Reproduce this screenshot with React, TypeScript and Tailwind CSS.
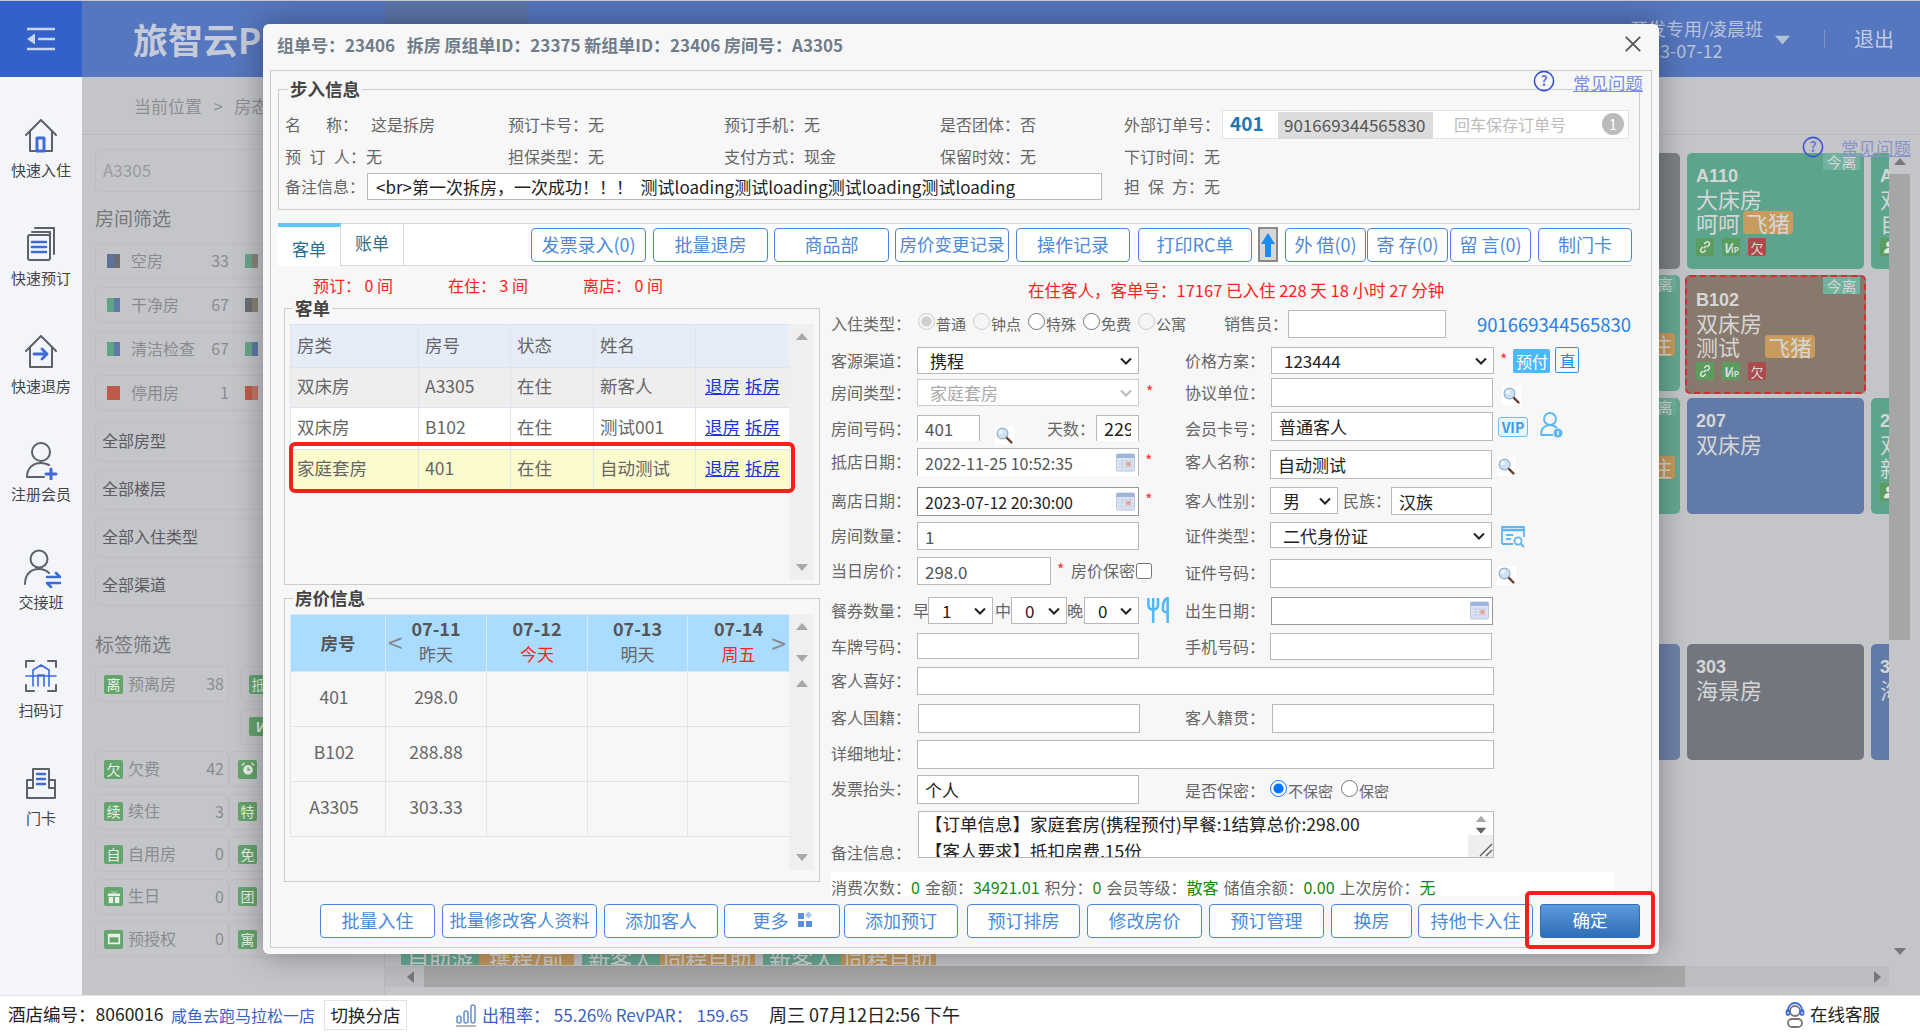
import React from "react";

const Mag = ({ c = "" }: { c?: string }) => (
  <svg viewBox="0 0 19 19" className={`w-[19px] h-[19px] shrink-0 bg-white ${c}`}>
    <circle cx="7.5" cy="7.5" r="5.4" fill="#cfe1f1" stroke="#8fb0cf" strokeWidth="1.2" />
    <circle cx="6" cy="6" r="2" fill="#eef6fc" />
    <path d="M12 12 L16.5 16.5" stroke="#6b3a26" strokeWidth="2.4" strokeLinecap="round" />
  </svg>
);

const Cal = ({ c = "" }: { c?: string }) => (
  <svg viewBox="0 0 19 19" className={`w-[19px] h-[19px] ${c}`}>
    <rect x="0.5" y="1" width="18" height="17" rx="1.5" fill="#dfe6f3" stroke="#b8c6de" />
    <rect x="0.5" y="1" width="18" height="4" fill="#9db5d8" />
    <path d="M2 8h15M2 11h15M2 14h15M6 6v11M10 6v11M14 6v11" stroke="#c4cfe3" strokeWidth="1" />
    <rect x="10.5" y="9" width="4" height="4" fill="#eda28e" />
  </svg>
);

const Tri = ({ dir, c = "" }: { dir: "u" | "d" | "l" | "r"; c?: string }) => {
  const pts = { u: "0,9 6,2 12,9", d: "0,3 12,3 6,10", l: "9,0 9,12 2,6", r: "3,0 3,12 10,6" }[dir];
  return (
    <svg viewBox="0 0 12 12" className={`w-[12px] h-[12px] ${c}`}>
      <polygon points={pts} fill="currentColor" />
    </svg>
  );
};

const I = ({ c, v, dis, fs = "text-[17px]" }: { c: string; v?: string; dis?: boolean; fs?: string }) => (
  <input
    readOnly
    defaultValue={v}
    className={`border border-[#b9b9b9] bg-white px-[7px] shrink-0 outline-none ${fs} ${dis ? "text-[#555]" : "text-[#222]"} ${c}`}
  />
);

const S = ({ c, v, dis, w }: { c: string; v: string; dis?: boolean; w: string }) => (
  <div className={`relative shrink-0 ${w}`}>
    <select
      disabled={dis}
      defaultValue={v}
      className={`appearance-none w-full border border-[#b9b9b9] bg-white text-[17px] outline-none opacity-100 ${dis ? "text-[#aaa]" : "text-[#222]"} ${c}`}
    >
      <option>{v}</option>
    </select>
    <svg viewBox="0 0 12 8" className="absolute right-[7px] top-[10px] w-[12px] h-[8px]" fill="none" stroke={dis ? "#bbb" : "#222"} strokeWidth="2">
      <path d="M1 1.5 6 6.5l5-5" />
    </svg>
  </div>
);

const L = ({ t, c = "w-[86px]" }: { t: string; c?: string }) => (
  <span className={`shrink-0 text-[16px] leading-[27px] text-[#666] whitespace-nowrap ${c}`}>{t}</span>
);

const Star = ({ c = "" }: { c?: string }) => <span className={`shrink-0 text-[16px] leading-[24px] text-[#f33] ${c}`}>*</span>;

const Btn = ({ t, c, children }: { t?: string; c: string; children?: React.ReactNode }) => (
  <button className={`h-[34px] shrink-0 rounded-[4px] border border-[#4a87d9] bg-white pb-[2px] text-[18px] leading-[28px] text-[#4a8ad9] flex items-center justify-center whitespace-nowrap ${c}`}>
    {t}
    {children}
  </button>
);

const Radio = ({ w, t, st }: { w: string; t: string; st: "on" | "off" | "dis" | "disoff" }) => (
  <label className={`flex items-center shrink-0 ${w}`}>
    <input
      type="radio"
      defaultChecked={st === "on" || st === "dis"}
      disabled={st === "dis" || st === "disoff"}
      className="w-[17px] h-[17px] shrink-0 -mt-[5px]"
    />
    <span className="ml-[1px] text-[15px] leading-[28px] text-[#666] whitespace-nowrap">{t}</span>
  </label>
);

const Sc = ({ c, up = true }: { c: string; up?: boolean }) => (
  <div className={`w-[25px] shrink-0 bg-[#efefef] flex flex-col items-center justify-between text-[#a8a8a8] ${c}`}>
    {up && <Tri dir="u" c="mt-[7px]" />}
    <Tri dir="d" c="mb-[7px]" />
  </div>
);

const Legend = ({ t }: { t: string }) => (
  <legend className="ml-[3px] px-[2px] text-[17.5px] font-bold leading-[24px] text-[#444]">{t}</legend>
);

const topBtns = [
  { t: "发票录入(0)", c: "ml-[127px] w-[115px]" },
  { t: "批量退房", c: "ml-[7px] w-[115px]" },
  { t: "商品部", c: "ml-[6px] w-[115px]" },
  { t: "房价变更记录", c: "ml-[6px] w-[114px] !text-[17.5px]" },
  { t: "操作记录", c: "ml-[7px] w-[114px]" },
  { t: "打印RC单", c: "ml-[8px] w-[114px]" },
];
const topBtns2 = [
  { t: "外 借(0)", c: "ml-[7px] w-[81px]" },
  { t: "寄 存(0)", c: "ml-[1px] w-[81px]" },
  { t: "留 言(0)", c: "ml-[2px] w-[81px]" },
  { t: "制门卡", c: "ml-[7px] w-[94px]" },
];

const guests = [
  { a: "双床房", b: "A3305", d: "新客人", bg: "bg-[#eeeeee]", h: "h-[40px]" },
  { a: "双床房", b: "B102", d: "测试001", bg: "bg-white", h: "h-[42px]" },
  { a: "家庭套房", b: "401", d: "自动测试", bg: "bg-[#fbfbce]", h: "h-[40px]" },
];

const Td = ({ c = "", children }: { c?: string; children?: React.ReactNode }) => (
  <td className={`border border-[#dde4ef] px-[6px] pb-[2px] text-[17.5px] text-[#666] whitespace-nowrap ${c}`}>{children}</td>
);

const prices = [
  { r: "401", p: "298.0" },
  { r: "B102", p: "288.88" },
  { r: "A3305", p: "303.33" },
];

const Nav = ({ t, children }: { t: string; children: React.ReactNode }) => (
  <div className="h-[108px] flex flex-col items-center">
    <div className="h-[48px] flex items-center justify-center">{children}</div>
    <div className="text-[15px] leading-[20px] text-[#444]">{t}</div>
  </div>
);

const navS = { fill: "none", stroke: "#5d6168", strokeWidth: 2, strokeLinecap: "round" as const, strokeLinejoin: "round" as const };

const Tag = ({ t, n, g }: { t: string; n?: string; g: React.ReactNode }) => (
  <div className="h-[36px] w-[134px] shrink-0 rounded-[6px] border border-[#bcbdc1] flex items-center pl-[8px] pr-[4px]">
    <span className="w-[19px] h-[19px] bg-[#65a46c] text-[#e8efe8] rounded-[2px] text-[14px] leading-[19px] text-center shrink-0 flex items-center justify-center">{g}</span>
    <span className="ml-[5px] pb-[3px] text-[16px] text-[#8a8b8f] flex-1">{t}</span>
    <span className="pb-[2px] text-[16px] text-[#8a8b8f]">{n}</span>
  </div>
);

const Tag2 = ({ g, c }: { g: React.ReactNode; c: string }) => (
  <div className={`h-[36px] w-[120px] shrink-0 rounded-[6px] border border-[#bcbdc1] flex items-center pl-[8px] ${c}`}>
    <span className="w-[19px] h-[19px] bg-[#65a46c] text-[#e8efe8] rounded-[2px] text-[14px] leading-[19px] text-center shrink-0 flex items-center justify-center">{g}</span>
  </div>
);

const filterRows = [
  { a: "bg-[#5f7298]", a2: "bg-[#6a6d72]", t: "空房", n: "33", b: "bg-[#6aa58c]", b2: "bg-[#8d8478]" },
  { a: "bg-[#5fa486]", a2: "bg-[#5f7aa8]", t: "干净房", n: "67", b: "bg-[#6b6e74]", b2: "bg-[#8a8276]" },
  { a: "bg-[#5fa486]", a2: "bg-[#5f7aa8]", t: "清洁检查", n: "67", b: "bg-[#6aa58c]", b2: "bg-[#5f7aa8]" },
  { a: "bg-[#c05a48]", a2: "bg-[#c05a48]", t: "停用房", n: "1", b: "bg-[#c05a48]", b2: "bg-[#c0786a]" },
];

const Mini = ({ k }: { k: string }) => (
  <span className={`w-[18px] h-[18px] rounded-[2px] flex items-center justify-center text-[13px] leading-none text-[#dcdcdc] shrink-0 ${k === "欠" ? "bg-[#ad4a4c]" : "bg-[#5a9d5e]"}`}>
    {k === "link" ? (
      <svg viewBox="0 0 16 16" className="w-[14px] h-[14px]" fill="none" stroke="#e6e6e6" strokeWidth="1.6">
        <path d="M6.5 9.5 9.5 6.5M7 4.5 9 2.7a2.4 2.4 0 0 1 3.4 3.4L10.6 8M9 11.5 7 13.3A2.4 2.4 0 0 1 3.6 9.9L5.4 8" />
      </svg>
    ) : k === "v" ? (
      <span className="text-[13px] font-bold italic">V<span className="text-[8px] not-italic">IP</span></span>
    ) : k === "p" ? (
      <svg viewBox="0 0 16 16" className="w-[14px] h-[14px]" fill="#e6e6e6">
        <circle cx="8" cy="5" r="3.2" />
        <path d="M2 15c0-4 3-6 6-6s6 2 6 6z" />
      </svg>
    ) : (
      k
    )}
  </span>
);

const Card = ({
  no,
  type,
  guest,
  pill,
  pillEnd,
  pillC = "ml-[3px]",
  icons,
  bg,
  today,
  c = "w-[177px] h-[116px]",
}: {
  no?: string;
  type?: string;
  guest?: string;
  pill?: string;
  pillEnd?: boolean;
  pillC?: string;
  icons?: string[];
  bg: string;
  today?: boolean;
  c?: string;
}) => (
  <div className={`relative shrink-0 rounded-[5px] pl-[9px] pt-[11px] ${bg} ${c}`}>
    {today && <div className="absolute top-0 right-[4px] w-[37px] h-[17px] bg-[#70b29d] text-[15px] leading-[17px] text-center text-[#d5d5d5]">今离</div>}
    <div className="h-[22px] text-[18px] font-bold leading-[24px] text-[#d6d6d6] font-['Liberation_Sans']">{no}</div>
    <div className="h-[24px] text-[22px] leading-[24px] text-[#d6d6d6] whitespace-nowrap">{type}</div>
    <div className={`flex h-[24px] items-center text-[22px] leading-[24px] text-[#d6d6d6] whitespace-nowrap ${pillEnd ? "justify-between pr-[5px]" : ""}`}>
      {guest}
      {pill && <span className={`h-[23px] w-[50px] text-center rounded-[3px] bg-[#c89a5c] text-[22px] leading-[22px] ${pillC}`}>{pill}</span>}
    </div>
    {icons && (
      <div className="flex gap-[8px] mt-[4px]">
        {icons.map((k) => (
          <Mini key={k} k={k} />
        ))}
      </div>
    )}
  </div>
);

const Stat = ({ k, v }: { k: string; v: string }) => (
  <>
    <span className="text-[#666]">{k}</span>
    <span className="text-[#128a12] mr-[5px]">{v}</span>
  </>
);

const Help = ({ c }: { c: string }) => (
  <svg viewBox="0 0 22 22" className={`w-[22px] h-[22px] ${c}`}>
    <circle cx="11" cy="11" r="9.6" fill="none" stroke="#3d51d6" strokeWidth="1.6" />
    <text x="11" y="16" textAnchor="middle" fontSize="14" fontWeight="700" fill="#6c7fd8">?</text>
  </svg>
);

export default function App() {
  return (
    <div className="relative w-[1920px] h-[1034px] overflow-hidden bg-white [font-family:'Noto_Sans_CJK_SC','Noto_Sans',sans-serif]">
      <div className="flex h-[995px]">
        {/* sidebar */}
        <aside className="w-[82px] shrink-0 bg-[#f4f5fb] flex flex-col">
          <div className="h-[77px] bg-[#3361c9] border-t border-[#c8cad0] flex items-center justify-center">
            <svg viewBox="0 0 28 24" className="w-[28px] h-[24px]">
              <path d="M0 2h28M11 12h17M0 22h28" stroke="#c7d5f2" strokeWidth="2.4" fill="none" />
              <polygon points="0,12 8,6.5 8,17.5" fill="#c7d5f2" />
            </svg>
          </div>
          <div className="pt-[35px]">
            <Nav t="快速入住">
              <svg viewBox="0 0 34 36" className="w-[34px] h-[36px]" {...navS}>
                <path d="M2 17 17 2l15 15M6 14v19h22V14" />
                <rect x="13" y="20" width="7" height="13" stroke="#3d6bd8" fill="none" strokeWidth="3" />
              </svg>
            </Nav>
            <Nav t="快速预订">
              <svg viewBox="0 0 30 36" className="w-[30px] h-[36px]" {...navS}>
                <path d="M9 2h19v26" />
                <path d="M6 6h18v3" />
                <rect x="2" y="9" width="22" height="25" rx="2" />
                <path d="M6 16h14M6 21h14M6 26h14" stroke="#3d6bd8" strokeWidth="2.6" />
              </svg>
            </Nav>
            <Nav t="快速退房">
              <svg viewBox="0 0 34 36" className="w-[34px] h-[36px]" {...navS}>
                <path d="M2 17 17 2l15 15M6 14v19h22V14" />
                <path d="M10 20h13M18 15l5 5-5 5" stroke="#3d6bd8" strokeWidth="2.8" />
              </svg>
            </Nav>
            <Nav t="注册会员">
              <svg viewBox="0 0 34 40" className="w-[34px] h-[40px]" {...navS}>
                <circle cx="17" cy="12" r="9" />
                <path d="M3 37c0-9 6-14 14-14 3 0 6 1 8 2M3 37h17" />
                <path d="M22 34h10M27 29v10" stroke="#3d6bd8" strokeWidth="3" />
              </svg>
            </Nav>
            <Nav t="交接班">
              <svg viewBox="0 0 40 40" className="w-[40px] h-[40px] ml-[3px]" {...navS}>
                <circle cx="16" cy="11" r="8.5" />
                <path d="M2 36c0-10 6-15 14-15 4 0 7 1 10 4" />
                <path d="M24 29h13l-4-4M37 35H24l4 4" stroke="#3d6bd8" strokeWidth="2.6" />
              </svg>
            </Nav>
            <Nav t="扫码订">
              <svg viewBox="0 0 34 36" className="w-[34px] h-[36px]" {...navS}>
                <path d="M2 9V3h8M24 3h8v6M2 27v6h8M24 33h8v-6" />
                <path d="M9 28V12l8-5 8 5v16M2 18h30M14 28V17h6v11" stroke="#3d6bd8" strokeWidth="1.6" fill="none" />
              </svg>
            </Nav>
            <Nav t="门卡">
              <svg viewBox="0 0 34 36" className="w-[34px] h-[36px]" {...navS}>
                <path d="M9 21V3h16v18" />
                <path d="M9 14H3v18h28V14h-6M3 22h6M25 22h6" />
                <path d="M13 8h8M13 13h8M13 18h8" stroke="#3d6bd8" strokeWidth="2.4" />
              </svg>
            </Nav>
          </div>
        </aside>

        <div className="flex-1 flex flex-col bg-[#c4c5c9] min-w-0">
          {/* header */}
          <header className="h-[77px] shrink-0 bg-[#5577bf] border-t border-[#c8cad0] flex items-center pl-[51px] pr-[26px]">
            <div className="w-[252px] text-[35px] font-bold text-[#c6cbd9] whitespace-nowrap overflow-hidden">旅智云PMS</div>
            <div className="w-[143px] h-[24px] self-start bg-[#5c74a8]" />
            <div className="ml-auto text-[18px] leading-[22px] text-[#b9c3da] w-[140px]">
              <div className="whitespace-nowrap">开发专用/凌晨班</div>
              <div>2023-07-12</div>
            </div>
            <Tri dir="d" c="ml-[5px] text-[#b3bed8] w-[15px] h-[15px]" />
            <div className="ml-[34px] w-px h-[18px] bg-[#8095c4]" />
            <div className="ml-[29px] text-[20px] text-[#c3cbe0]">退出</div>
          </header>
          <div className="h-[58px] shrink-0 border-b border-[#b8b9bd] flex items-center pl-[52px] text-[17px] text-[#8e8f94] whitespace-nowrap">
            当前位置&nbsp;&nbsp;&nbsp;&gt;&nbsp;&nbsp;&nbsp;房态
          </div>

          <div className="flex-1 flex min-h-0">
            {/* filters */}
            <div className="w-[303px] shrink-0 border-r border-[#b8b9bd] pl-[13px] overflow-hidden">
              <div className="mt-[14px] h-[43px] w-[270px] rounded-[6px] border border-[#bcbdc1] pl-[7px] text-[17px] leading-[40px] text-[#9a9b9f]">A3305</div>
              <div className="mt-[13px] h-[28px] text-[19px] leading-[26px] text-[#77787c]">房间筛选</div>
              <div className="mt-[10px] flex flex-col gap-[8px]">
                {filterRows.map((r) => (
                  <div key={r.t} className="h-[36px] w-[280px] rounded-[6px] border border-[#bcbdc1] flex items-center">
                    <div className="w-[138px] h-full flex items-center pl-[11px] pr-[4px] border-r border-[#bcbdc1] shrink-0">
                      <span className={`w-[7px] h-[14px] ${r.a}`} />
                      <span className={`w-[6px] h-[14px] ${r.a2}`} />
                      <span className="ml-[11px] pb-[2px] flex-1 text-[16px] text-[#8a8b8f]">{r.t}</span>
                      <span className="pb-[2px] text-[16px] text-[#8a8b8f]">{r.n}</span>
                    </div>
                    <span className={`ml-[11px] w-[7px] h-[14px] ${r.b}`} />
                    <span className={`w-[6px] h-[14px] ${r.b2}`} />
                  </div>
                ))}
              </div>
              <div className="mt-[11px] flex flex-col gap-[8px]">
                {["全部房型", "全部楼层", "全部入住类型", "全部渠道"].map((t) => (
                  <div key={t} className="h-[40px] w-[280px] rounded-[6px] border border-[#bcbdc1] pl-[6px] text-[16px] leading-[35px] text-[#5a5b5f]">
                    {t}
                  </div>
                ))}
              </div>
              <div className="mt-[25px] h-[28px] text-[19px] leading-[26px] text-[#77787c]">标签筛选</div>
              <div className="mt-[7px] flex flex-col gap-[6.5px]">
                <div className="flex">
                  <Tag t="预离房" n="38" g="离" />
                  <Tag2 c="ml-[11px]" g="抵" />
                </div>
                <div className="flex">
                  <div className="w-[134px] shrink-0" />
                  <Tag2 c="ml-[11px]" g={<span className="font-bold italic text-[13px]">V</span>} />
                </div>
                <div className="flex">
                  <Tag t="欠费" n="42" g="欠" />
                  <Tag2 c="" g={<svg viewBox="0 0 16 16" className="w-[14px] h-[14px]"><circle cx="8" cy="9" r="5.5" fill="#e8efe8" /><path d="M8 6v3h2.5" stroke="#65a46c" strokeWidth="1.4" fill="none" /><path d="M1 4l3-3M15 4l-3-3" stroke="#e8efe8" strokeWidth="1.6" /></svg>} />
                </div>
                <div className="flex">
                  <Tag t="续住" n="3" g="续" />
                  <Tag2 c="" g="特" />
                </div>
                <div className="flex">
                  <Tag t="自用房" n="0" g="自" />
                  <Tag2 c="" g="免" />
                </div>
                <div className="flex">
                  <Tag t="生日" n="0" g={<svg viewBox="0 0 16 16" className="w-[14px] h-[14px]" fill="#e8efe8"><rect x="1" y="4" width="14" height="3" /><rect x="2" y="8" width="5" height="7" /><rect x="9" y="8" width="5" height="7" /><path d="M5 1l3 3 3-3" stroke="#e8efe8" fill="none" /></svg>} />
                  <Tag2 c="" g="团" />
                </div>
                <div className="flex">
                  <Tag t="预授权" n="0" g={<svg viewBox="0 0 16 16" className="w-[14px] h-[14px]" fill="#e8efe8"><path d="M1 2h14v12H1zM3 6h10v6H3z" fillRule="evenodd" /></svg>} />
                  <Tag2 c="" g="寓" />
                </div>
              </div>
            </div>

            {/* rooms */}
            <div className="flex-1 flex flex-col min-w-0">
              <div className="relative h-[831px] shrink-0 flex">
                <div className="w-[1504px] shrink-0 overflow-hidden pt-[18px]">
                  <div className="flex gap-[7px] ml-[1118px]">
                    <Card bg="bg-[#7d8185]" />
                    <Card no="A110" type="大床房" guest="呵呵" pill="飞猪" icons={["link", "v", "欠"]} bg="bg-[#5ca58c]" today />
                    <Card no="A111" type="双床房" guest="自助" icons={["p"]} bg="bg-[#5ca58c]" />
                  </div>
                  <div className="flex mt-[6px] ml-[1118px] h-[119px]">
                    <Card no="B101" type="双床房" guest="测试" pill="连住" pillEnd bg="bg-[#67a892]" today />
                    <Card no="B102" type="双床房" guest="测试" pill="飞猪" pillC="ml-[25px]" icons={["link", "v", "欠"]} bg="bg-[#88796d]" today c="w-[181px] h-[119px] ml-[5px] border-2 border-dashed border-[#cc3030]" />
                  </div>
                  <div className="flex gap-[7px] mt-[4px] ml-[1118px]">
                    <Card no="206" type="双床房" guest="测试" pill="连住" pillEnd bg="bg-[#67a892]" today />
                    <Card no="207" type="双床房" bg="bg-[#627aa7]" />
                    <Card no="208" type="双床房" guest="新客人" icons={["p"]} bg="bg-[#5ca58c]" />
                  </div>
                  <div className="flex gap-[7px] mt-[130px] ml-[1118px]">
                    <Card no="302" type="海景房" bg="bg-[#6f82a9]" />
                    <Card no="303" type="海景房" bg="bg-[#72767e]" />
                    <Card no="305" type="海景房" bg="bg-[#627aa7]" />
                  </div>
                  <div className="flex mt-[185px] ml-[16px] gap-[8px] h-[20px] text-[22px] leading-[26px] text-[#d6d6d6] whitespace-nowrap overflow-hidden w-[545px]">
                    {[0, 1, 2].map((i) => (
                      <div key={i} className="flex">
                        <span className="bg-[#6aa893] w-[78px] pl-[6px] overflow-hidden">{i === 0 ? "自助游" : "新客人"}</span>
                        <span className="bg-[#c59b62] w-[95px] overflow-hidden text-center">{i === 0 ? "携程/前" : "同程自助"}</span>
                      </div>
                    ))}
                  </div>
                </div>
                <div className="relative w-[29px] shrink-0 text-[#77787c] flex flex-col items-center pt-[21px] pb-[9px] pr-[8px]">
                  <Tri dir="u" />
                  <div className="mt-[6px] w-[21px] h-[466px] bg-[#a6a6a6]" />
                  <Tri dir="d" c="mt-auto" />
                </div>
                <Help c="absolute top-[1px] left-[1417px]" />
                <div className="absolute top-[1px] left-[1456px] text-[17.5px] leading-[24px] text-[#8a94c8] underline whitespace-nowrap">常见问题</div>
              </div>
              <div className="h-[21px] shrink-0 flex items-center pl-[20px] text-[#77787c] bg-[#bcbdc1] w-[1504px]">
                <Tri dir="l" c="shrink-0" />
                <div className="ml-[7px] w-[1261px] h-full bg-[#a6a6a6]" />
                <Tri dir="r" c="ml-auto mr-[6px]" />
              </div>
            </div>
          </div>
        </div>
      </div>

      {/* status bar */}
      <footer className="h-[39px] border-t border-[#e2e2e2] flex items-center pb-[1px] text-[17.5px] text-[#222] whitespace-nowrap bg-white">
        <span className="ml-[8px] w-[163px] shrink-0">酒店编号：8060016</span>
        <span className="w-[153px] shrink-0 text-[16px] text-[#3b62c4]">咸鱼去跑马拉松一店</span>
        <span className="w-[83px] h-[30px] shrink-0 border border-[#e2e2e2] text-center leading-[27px]">切换分店</span>
        <svg viewBox="0 0 22 24" className="ml-[48px] w-[22px] h-[24px] shrink-0" fill="none" stroke="#6f94d2" strokeWidth="1.6">
          <rect x="2" y="13" width="4" height="7" rx="2" />
          <rect x="9" y="8" width="4" height="12" rx="2" />
          <rect x="16" y="2" width="4" height="18" rx="2" />
          <path d="M1 23h20" stroke="#b5b5b5" strokeWidth="2" />
        </svg>
        <span className="ml-[5px] w-[265px] shrink-0 text-[17px] text-[#3b62c4]">出租率：&nbsp;55.26% RevPAR：&nbsp;159.65</span>
        <span className="ml-[22px] text-[18px]">周三 07月12日2:56 下午</span>
        <svg viewBox="0 0 20 26" className="ml-auto w-[20px] h-[26px]" fill="none" strokeWidth="1.8">
          <circle cx="10" cy="9" r="5" stroke="#777" />
          <path d="M3 10V8a7 7 0 0 1 14 0v2" stroke="#3d6bd8" />
          <rect x="1.5" y="8" width="3" height="5" rx="1.5" stroke="#3d6bd8" />
          <rect x="15.5" y="8" width="3" height="5" rx="1.5" stroke="#3d6bd8" />
          <rect x="3" y="17" width="14" height="8" rx="4" stroke="#777" />
        </svg>
        <span className="ml-[5px] mr-[40px]">在线客服</span>
      </footer>

      {/* modal */}
      <div className="absolute left-[263px] top-[24px] w-[1396px] h-[930px] rounded-[6px] bg-[#f7f7f7] shadow-[0_0_32px_rgba(0,0,0,0.35)]">
        <div className="h-[46px] pl-[14px] pb-[5px] flex items-center text-[17px] font-bold text-[#6f7c8b] whitespace-nowrap">
          组单号：23406&nbsp;&nbsp;&nbsp;拆房 原组单ID：23375 新组单ID：23406 房间号：A3305
        </div>
        <svg viewBox="0 0 20 20" className="absolute left-[1361px] top-[11px] w-[18px] h-[18px]" stroke="#555" strokeWidth="2">
          <path d="M2 2 18 18M18 2 2 18" />
        </svg>
        <Help c="absolute left-[1270px] top-[46px]" />
        <div className="absolute left-[1310px] top-[47px] text-[17.5px] leading-[24px] text-[#7a8ee8] underline whitespace-nowrap">常见问题</div>

        <div className="mx-[7px] h-[878px] border border-[#ccc]">
          {/* walk-in info */}
          <fieldset className="ml-[7px] mt-[6px] w-[1362px] h-[133px] border border-[#ccc] pl-[6px] pt-[7px]">
            <Legend t="步入信息" />
            <div className="flex h-[32px] items-center text-[16px] text-[#666] whitespace-nowrap">
              <div className="w-[223px] flex"><span className="w-[86px] flex justify-between pr-[13px]"><span>名</span><span>称：</span></span>这是拆房</div>
              <div className="w-[216px]">预订卡号：无</div>
              <div className="w-[216px]">预订手机：无</div>
              <div className="w-[184px]">是否团体：否</div>
              <div className="w-[98px]">外部订单号：</div>
              <div className="w-[407px] h-[29px] bg-white border border-[#e4e4e4] flex items-center relative">
                <span className="w-[55px] pl-[7px] pb-[2px] text-[19px] font-bold text-[#1f77b4]">401</span>
                <span className="w-[155px] h-[27px] bg-[#dcdcdc] mt-[2px] pl-[6px] text-[#555] text-[17px] leading-[26px]">901669344565830</span>
                <span className="ml-[21px] text-[#bcbcbc] text-[16px]">回车保存订单号</span>
                <span className="ml-auto mr-[4px] w-[22px] h-[22px] rounded-full bg-[#bbb] text-white text-[15px] leading-[22px] text-center">1</span>
              </div>
            </div>
            <div className="flex h-[32px] items-center text-[16px] text-[#666] whitespace-nowrap">
              <div className="w-[223px] flex"><span className="w-[81px] flex justify-between"><span>预</span><span>订</span><span>人：</span></span>无</div>
              <div className="w-[216px]">担保类型：无</div>
              <div className="w-[216px]">支付方式：现金</div>
              <div className="w-[184px]">保留时效：无</div>
              <div>下订时间：无</div>
            </div>
            <div className="flex h-[28px] items-center text-[16px] text-[#666] whitespace-nowrap">
              <div className="w-[82px]">备注信息：</div>
              <input readOnly defaultValue="<br>第一次拆房，一次成功！！！  测试loading测试loading测试loading测试loading" className="w-[735px] h-[27px] border border-[#b9b9b9] bg-white px-[8px] text-[17px] text-[#222] outline-none" />
              <div className="ml-[22px] flex"><span className="w-[80px] flex justify-between"><span>担</span><span>保</span><span>方：</span></span>无</div>
            </div>
          </fieldset>

          {/* tabs */}
          <div className="ml-[7px] mt-[13px] w-[1354px] h-[43px] bg-white border-y border-[#d8d8d8] flex items-center">
            <div className="relative w-[63px] h-[43px] -mt-[1px] -mb-[1px] shrink-0 border-t-[4px] border-[#5cc8f5] border-r border-r-[#d8d8d8] bg-white text-center text-[17px] leading-[44px] text-[#1f6e8c]">客单</div>
            <div className="w-[63px] h-[41px] shrink-0 border-r border-[#d8d8d8] text-center text-[17px] leading-[38px] text-[#2a6f8e]">账单</div>
            {topBtns.map((b) => (
              <Btn key={b.t} t={b.t} c={b.c} />
            ))}
            <div className="ml-[6px] w-[20px] h-[35px] shrink-0 border-2 border-[#8a8a8a] bg-[#d8d8d8] flex items-center justify-center">
              <svg viewBox="0 0 14 26" className="w-[14px] h-[26px]">
                <polygon points="7,1 14,12 10,12 10,25 4,25 4,12 0,12" fill="#1b8df0" />
              </svg>
            </div>
            {topBtns2.map((b) => (
              <Btn key={b.t} t={b.t} c={b.c} />
            ))}
          </div>

          {/* body columns */}
          <div className="flex ml-[13px] h-[630px]">
            <div className="w-[535px] shrink-0">
              <div className="h-[30px] pt-[8px] pl-[29px] flex text-[16px] leading-[22px] text-[#f22] whitespace-nowrap">
                <span className="w-[135px]">预订：&nbsp;0&nbsp;间</span>
                <span className="w-[135px]">在住：&nbsp;3&nbsp;间</span>
                <span>离店：&nbsp;0&nbsp;间</span>
              </div>
              <fieldset className="h-[289px] border border-[#ccc] px-[5px] pt-[4px]">
                <Legend t="客单" />
                <div className="flex h-[256px]">
                  <div className="w-[499px] shrink-0">
                    <table className="w-[499px] table-fixed border-collapse">
                      <colgroup>
                        <col className="w-[128px]" />
                        <col className="w-[92px]" />
                        <col className="w-[83px]" />
                        <col className="w-[102px]" />
                        <col className="w-[94px]" />
                      </colgroup>
                      <thead>
                        <tr className="h-[43px] bg-[#e6edf8]">
                          <Td>房类</Td>
                          <Td>房号</Td>
                          <Td>状态</Td>
                          <Td>姓名</Td>
                          <Td />
                        </tr>
                      </thead>
                      <tbody>
                        {guests.map((g) => (
                          <tr key={g.b} className={`${g.h} ${g.bg}`}>
                            <Td>{g.a}</Td>
                            <Td>{g.b}</Td>
                            <Td>在住</Td>
                            <Td>{g.d}</Td>
                            <Td c="text-center">
                              <span className="text-[#1d35d8] underline">退房</span>
                              <span className="text-[#1d35d8] underline ml-[5px]">拆房</span>
                            </Td>
                          </tr>
                        ))}
                      </tbody>
                    </table>
                  </div>
                  <Sc c="h-[256px]" />
                </div>
              </fieldset>
              <fieldset className="mt-[1px] h-[296px] border border-[#ccc] px-[5px] pt-[4px]">
                <Legend t="房价信息" />
                <div className="flex h-[256px]">
                  <div className="w-[499px] shrink-0">
                    <table className="w-[499px] table-fixed border-collapse">
                      <colgroup>
                        <col className="w-[95px]" />
                        <col className="w-[101px]" />
                        <col className="w-[101px]" />
                        <col className="w-[100px]" />
                        <col className="w-[102px]" />
                      </colgroup>
                      <thead>
                        <tr className="h-[57px] bg-[#aadcff] text-center">
                          <th className="border border-[#d5eaf8] text-[17.5px] font-bold text-[#555]">房号</th>
                          <th className="relative border border-[#d5eaf8] pb-[4px] font-normal">
                            <span className="absolute left-[2px] top-[12px] text-[26px] leading-[30px] text-[#888]">&lt;</span>
                            <div className="text-[18px] font-bold leading-[25px] text-[#555]">07-11</div>
                            <div className="text-[17px] leading-[25px] text-[#666]">昨天</div>
                          </th>
                          <th className="border border-[#d5eaf8] pb-[4px] font-normal">
                            <div className="text-[18px] font-bold leading-[25px] text-[#555]">07-12</div>
                            <div className="text-[17px] leading-[25px] text-[#f22]">今天</div>
                          </th>
                          <th className="border border-[#d5eaf8] pb-[4px] font-normal">
                            <div className="text-[18px] font-bold leading-[25px] text-[#555]">07-13</div>
                            <div className="text-[17px] leading-[25px] text-[#666]">明天</div>
                          </th>
                          <th className="relative border border-[#d5eaf8] pb-[4px] font-normal">
                            <span className="absolute right-[3px] top-[13px] text-[26px] leading-[30px] text-[#888]">&gt;</span>
                            <div className="text-[18px] font-bold leading-[25px] text-[#555]">07-14</div>
                            <div className="text-[17px] leading-[25px] text-[#f22]">周五</div>
                          </th>
                        </tr>
                      </thead>
                      <tbody>
                        {prices.map((p) => (
                          <tr key={p.r} className="h-[55px] text-center">
                            <td className="border border-[#e4e4e4] pb-[4px] pr-[8px] text-[17.5px] text-[#666]">{p.r}</td>
                            <td className="border border-[#e4e4e4] pb-[4px] text-[17.5px] text-[#666]">{p.p}</td>
                            <td className="border border-[#e4e4e4]" />
                            <td className="border border-[#e4e4e4]" />
                            <td className="border border-[#e4e4e4]" />
                          </tr>
                        ))}
                      </tbody>
                    </table>
                  </div>
                  <div className="flex flex-col">
                    <Sc c="h-[57px]" />
                    <Sc c="h-[199px]" />
                  </div>
                </div>
              </fieldset>
            </div>

            {/* form */}
            <div className="ml-[12px] flex-1 min-w-0">
              <div className="h-[44px] pt-[13px] pl-[197px] text-[16.5px] leading-[22px] text-[#f22] whitespace-nowrap">在住客人，客单号：17167 已入住 228 天 18 小时 27 分钟</div>
              <div className="flex h-[37px] items-start">
                <L t="入住类型：" />
                <div className="w-px shrink-0" />
                <Radio w="w-[55px]" t="普通" st="dis" />
                <Radio w="w-[55px]" t="钟点" st="disoff" />
                <Radio w="w-[55px]" t="特殊" st="off" />
                <Radio w="w-[55px]" t="免费" st="off" />
                <Radio w="w-[86px]" t="公寓" st="disoff" />
                <L t="销售员：" c="w-[64px]" />
                <I c="w-[158px] h-[28px]" />
                <span className="ml-[31px] text-[18.5px] leading-[29px] text-[#1e82e6]">901669344565830</span>
              </div>
              <div className="flex h-[32px] items-start">
                <L t="客源渠道：" />
                <S w="w-[222px]" c="h-[27px] pl-[12px]" v="携程" />
                <div className="w-[46px] shrink-0" />
                <L t="价格方案：" />
                <S w="w-[223px]" c="h-[27px] pl-[12px]" v="123444" />
                <Star c="ml-[6px]" />
                <span className="ml-[6px] mt-[2px] w-[37px] h-[24px] rounded-[2px] bg-[#4db8f8] text-white text-[16px] leading-[24px] text-center">预付</span>
                <span className="ml-[5px] w-[24px] h-[26px] rounded-[2px] border border-[#3a8fd8] text-[#2b86d4] text-[16px] leading-[24px] text-center">直</span>
              </div>
              <div className="flex h-[36px] items-start">
                <L t="房间类型：" />
                <S w="w-[222px]" c="h-[27px] pl-[12px] border-[#ccc]" v="家庭套房" dis />
                <div className="w-[46px] shrink-0 pl-[7px]"><Star /></div>
                <L t="协议单位：" />
                <I c="w-[222px] h-[29px] -mt-px" />
                <Mag c="ml-[9px] mt-[7px]" />
              </div>
              <div className="flex h-[33px] items-start">
                <L t="房间号码：" />
                <I c="w-[63px] h-[26px] border-b-0" v="401" dis />
                <Mag c="ml-[15px] mt-[11px] h-[15px]" />
                <L t="天数：" c="ml-[33px] w-[49px]" />
                <I c="w-[43px] h-[26px] border-b-0" fs="text-[18px]" v="229" />
                <div className="w-[46px] shrink-0" />
                <L t="会员卡号：" />
                <I c="w-[222px] h-[29px] -mt-[3px]" v="普通客人" />
                <span className="ml-[5px] w-[30px] h-[20px] mt-[2px] rounded-[3px] border border-[#6fbdf0] text-[#3f9be0] bg-[#eaf6fd] text-[14px] font-bold leading-[18px] text-center">VIP</span>
                <svg viewBox="0 0 24 28" className="ml-[11px] -mt-[4px] w-[24px] h-[28px]" fill="none" stroke="#5bb6f2" strokeWidth="1.8">
                  <circle cx="11" cy="8" r="6" />
                  <path d="M2 24c0-7 4-10 9-10 3 0 5 1 7 3M2 24h12" />
                  <circle cx="19" cy="22" r="4.5" fill="#5bb6f2" stroke="none" />
                  <path d="M19 20v4" stroke="#fff" strokeWidth="1.4" />
                </svg>
              </div>
              <div className="flex h-[39px] items-start">
                <L t="抵店日期：" />
                <div className="relative w-[222px] h-[28px] shrink-0">
                  <I c="w-[222px] h-[28px] border-b-0" fs="text-[16px]" v="2022-11-25 10:52:35" dis />
                  <Cal c="absolute right-[4px] top-[5px]" />
                </div>
                <div className="w-[46px] shrink-0 pl-[6px]"><Star /></div>
                <L t="客人名称：" c="w-[85px]" />
                <I c="w-[222px] h-[29px] mt-[2px]" v="自动测试" />
                <Mag c="ml-[5px] mt-[9px]" />
              </div>
              <div className="flex h-[35px] items-start">
                <L t="离店日期：" />
                <div className="relative w-[222px] h-[29px] shrink-0">
                  <I c="w-[222px] h-[29px] !border-[#999]" fs="text-[16px]" v="2023-07-12 20:30:00" />
                  <Cal c="absolute right-[4px] top-[5px]" />
                </div>
                <div className="w-[46px] shrink-0 pl-[6px]"><Star /></div>
                <L t="客人性别：" c="w-[85px]" />
                <S w="w-[68px]" c="h-[27px] pl-[12px]" v="男" />
                <L t="民族：" c="ml-[5px] w-[48px]" />
                <I c="w-[101px] h-[28px]" v="汉族" />
              </div>
              <div className="flex h-[35px] items-start">
                <L t="房间数量：" />
                <I c="w-[222px] h-[28px]" v="1" dis />
                <div className="w-[46px] shrink-0" />
                <L t="证件类型：" c="w-[85px]" />
                <S w="w-[222px]" c="h-[26px] pl-[12px]" v="二代身份证" />
                <svg viewBox="0 0 24 24" className="ml-[9px] w-[24px] h-[24px] mt-[2px]" fill="none" stroke="#5bb6f2" strokeWidth="1.8">
                  <path d="M1 20V3h22v10M1 20h11" />
                  <path d="M1 6h22" strokeWidth="2.6" />
                  <path d="M5 11h7M5 15h5" />
                  <circle cx="17" cy="17" r="3.6" />
                  <path d="M20 20l3 3" />
                </svg>
              </div>
              <div className="flex h-[40px] items-start">
                <L t="当日房价：" />
                <I c="w-[134px] h-[28px]" v="298.0" dis />
                <span className="w-[20px] pl-[6px] shrink-0"><Star /></span>
                <span className="w-[65px] shrink-0 text-[16px] leading-[27px] text-[#666] whitespace-nowrap">房价保密</span>
                <input type="checkbox" className="w-[16px] h-[16px] mt-[6px] shrink-0" />
                <L t="证件号码：" c="ml-[33px] w-[85px] mt-[2px]" />
                <I c="w-[222px] h-[29px] mt-[2px]" />
                <Mag c="ml-[5px] mt-[9px]" />
              </div>
              <div className="flex h-[36px] items-start">
                <L t="餐券数量：" c="w-[82px]" />
                <L t="早" c="w-[15px]" />
                <S w="w-[65px]" c="h-[27px] pl-[13px]" v="1" />
                <L t="中" c="ml-[2px] w-[16px]" />
                <S w="w-[56px]" c="h-[27px] pl-[13px]" v="0" />
                <L t="晚" c="w-[17px]" />
                <S w="w-[55px]" c="h-[27px] pl-[13px]" v="0" />
                <svg viewBox="0 0 24 28" className="ml-[7px] w-[24px] h-[27px]" fill="none" stroke="#4db8f8" strokeWidth="2.6">
                  <path d="M2 1v7c0 4 3 5 5 5s5-1 5-5V1M7 1v26" />
                  <path d="M22 1c-3 1-5 5-5 11 0 3 2 4 5 4zM22 1v26" />
                </svg>
                <L t="出生日期：" c="ml-[15px] w-[86px]" />
                <div className="relative w-[222px] h-[28px] shrink-0">
                  <I c="w-[222px] h-[28px] !border-[#999]" />
                  <Cal c="absolute right-[4px] top-[4px]" />
                </div>
              </div>
              <div className="flex h-[34px] items-start">
                <L t="车牌号码：" />
                <I c="w-[222px] h-[26px]" />
                <div className="w-[46px] shrink-0" />
                <L t="手机号码：" c="w-[85px]" />
                <I c="w-[222px] h-[27px]" />
              </div>
              <div className="flex h-[37px] items-start">
                <L t="客人喜好：" />
                <I c="w-[577px] h-[28px]" />
              </div>
              <div className="flex h-[36px] items-start">
                <L t="客人国籍：" c="w-[87px]" />
                <I c="w-[222px] h-[29px]" />
                <div className="w-[45px] shrink-0" />
                <L t="客人籍贯：" c="w-[87px]" />
                <I c="w-[222px] h-[29px]" />
              </div>
              <div className="flex h-[35px] items-start">
                <L t="详细地址：" />
                <I c="w-[577px] h-[29px]" />
              </div>
              <div className="flex h-[36px] items-start">
                <L t="发票抬头：" />
                <I c="w-[222px] h-[29px]" v="个人" />
                <div className="w-[46px] shrink-0" />
                <L t="是否保密：" c="w-[85px] mt-[2px]" />
                <div className="mt-[2px] flex">
                  <Radio w="w-[71px]" t="不保密" st="on" />
                  <Radio w="w-[60px]" t="保密" st="off" />
                </div>
              </div>
              <div className="flex h-[61px] items-start">
                <L t="备注信息：" c="w-[87px] mt-[28px]" />
                <div className="w-[576px] h-[47px] border border-[#b9b9b9] bg-white flex overflow-hidden">
                  <div className="flex-1 pl-[6px] -mt-[2px] text-[17.5px] leading-[27px] text-[#222] whitespace-nowrap overflow-hidden">
                    <div>【订单信息】家庭套房(携程预付)早餐:1结算总价:298.00</div>
                    <div>【客人要求】抵扣房费,15份</div>
                  </div>
                  <div className="w-[25px] shrink-0 flex flex-col">
                    <div className="h-[23px] bg-white flex flex-col items-center text-[#666] pt-[2px]">
                      <Tri dir="u" c="text-[#aaa] h-[9px]" />
                      <Tri dir="d" c="h-[9px]" />
                    </div>
                    <div className="flex-1 bg-[#eee] flex items-end justify-end">
                      <svg viewBox="0 0 14 14" className="w-[14px] h-[14px]" stroke="#555" strokeWidth="1.2">
                        <path d="M13 1 1 13M13 7 7 13" />
                      </svg>
                    </div>
                  </div>
                </div>
              </div>
              <div className="w-[783px] h-[24px] bg-white overflow-hidden text-[16px] leading-[30px] whitespace-nowrap">
                <Stat k="消费次数：" v="0" />
                <Stat k="金额：" v="34921.01" />
                <Stat k="积分：" v="0" />
                <Stat k="会员等级：" v="散客" />
                <Stat k="储值余额：" v="0.00" />
                <Stat k="上次房价：" v="无" />
              </div>
            </div>
          </div>

          {/* actions */}
          <div className="flex mt-[8px] ml-[49px]">
            <Btn t="批量入住" c="w-[115px]" />
            <Btn t="批量修改客人资料" c="ml-[7px] w-[155px] !text-[17.5px]" />
            <Btn t="添加客人" c="ml-[7px] w-[114px]" />
            <Btn t="更多" c="ml-[6px] w-[116px]">
              <svg viewBox="0 0 14 16" className="ml-[9px] w-[14px] h-[16px]" fill="#5a8fdb">
                <rect x="0" y="1" width="6" height="6" />
                <rect x="8" y="0.5" width="5" height="5" transform="rotate(45 10.5 3)" fill="#a9c7ee" />
                <rect x="0" y="9" width="6" height="6" />
                <rect x="8" y="9" width="6" height="6" />
              </svg>
            </Btn>
            <Btn t="添加预订" c="ml-[4px] w-[114px]" />
            <Btn t="预订排房" c="ml-[9px] w-[113px]" />
            <Btn t="修改房价" c="ml-[7px] w-[115px]" />
            <Btn t="预订管理" c="ml-[7px] w-[115px]" />
            <Btn t="换房" c="ml-[7px] w-[81px]" />
            <Btn t="持他卡入住" c="ml-[6px] w-[115px]" />
            <button className="ml-[7px] w-[100px] h-[34px] shrink-0 rounded-[3px] border border-[#2f6fb5] bg-gradient-to-b from-[#5d9ade] to-[#2e6eb4] pb-[2px] text-white text-[17.5px]">确定</button>
          </div>
        </div>

        <div className="absolute left-[26px] top-[418px] w-[506px] h-[51px] rounded-[6px] border-[4px] border-[#f5201a]" />
        <div className="absolute left-[1262px] top-[867px] w-[130px] h-[58px] rounded-[5px] border-[4px] border-[#f5201a]" />
      </div>
    </div>
  );
}
